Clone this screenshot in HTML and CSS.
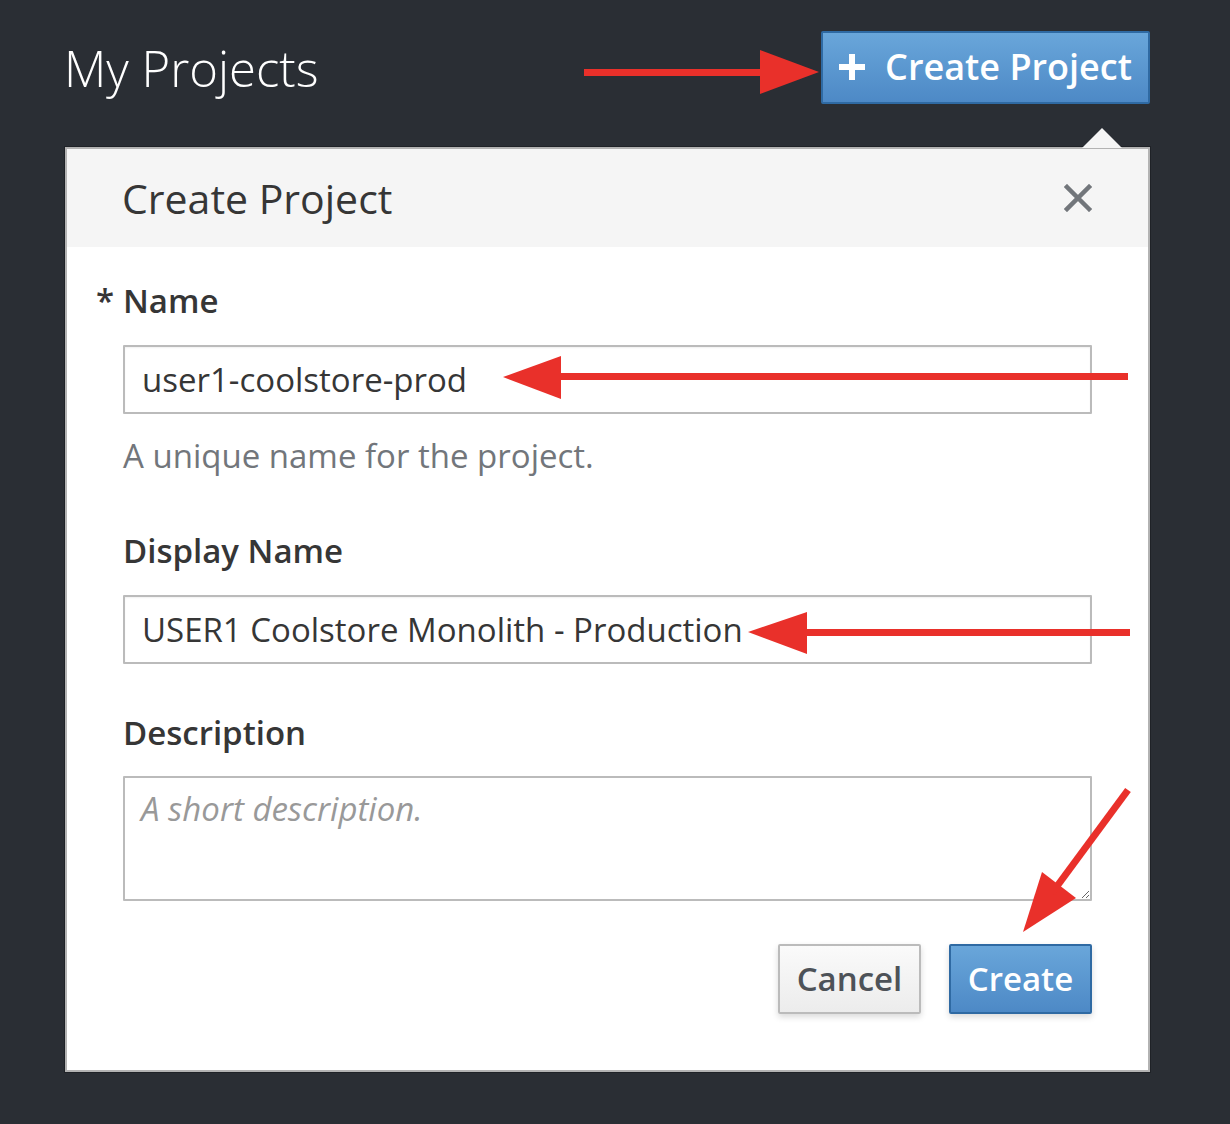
FILE: index.html
```html
<!DOCTYPE html>
<html lang="en">
<head>
<meta charset="utf-8">
<title>My Projects</title>
<link rel="stylesheet" href="styles.css">
</head>
<body>
<div class="page">
  <header class="top">
    <h1 class="page-title">My Projects</h1>
    <button class="btn-create-project" type="button">
      <svg class="plus" width="26" height="26" viewBox="0 0 26 26" aria-hidden="true"><rect x="10" y="0" width="6" height="26" fill="#fff"/><rect x="0" y="10" width="26" height="6" fill="#fff"/></svg>
      <span>Create Project</span>
    </button>
  </header>

  <section class="popover">
    <div class="caret"></div>
    <div class="pop-head">
      <h2 class="pop-title">Create Project</h2>
      <button class="close" type="button" aria-label="Close">
        <svg width="28" height="28" viewBox="0 0 28 28"><path d="M3 3 L25 25 M25 3 L3 25" stroke="#72767b" stroke-width="4.5" stroke-linecap="square"/></svg>
      </button>
    </div>
    <form class="pop-body">
      <label class="label"><span class="req">*</span>Name</label>
      <input class="input" type="text" value="user1-coolstore-prod">
      <p class="help">A unique name for the project.</p>

      <label class="label label-gap">Display Name</label>
      <input class="input" type="text" value="USER1 Coolstore Monolith - Production">

      <label class="label label-gap2">Description</label>
      <textarea class="textarea" placeholder="A short description."></textarea>

      <div class="actions">
        <button class="btn btn-default" type="button">Cancel</button>
        <button class="btn btn-primary" type="button">Create</button>
      </div>
    </form>
  </section>

  <svg class="marks" width="1230" height="1124" viewBox="0 0 1230 1124" aria-hidden="true">
    <g fill="#e9302a">
      <rect x="584" y="69" width="182" height="7"/>
      <polygon points="760,50 819,72 760,94"/>
      <rect x="555" y="373" width="573" height="7"/>
      <polygon points="503,377 561,356 561,399"/>
      <rect x="800" y="629" width="330" height="7"/>
      <polygon points="748,632 807,612 807,654"/>
      <polygon points="1023,932 1042,872 1076,898"/>
    </g>
    <line x1="1128" y1="790" x2="1052" y2="893" stroke="#e9302a" stroke-width="7"/>
  </svg>
</div>
</body>
</html>
```
FILE: styles.css
```css
* { box-sizing: border-box; }

html, body {
  margin: 0;
  padding: 0;
  background: #2a2e34;
}

body {
  font-family: "Open Sans", "Liberation Sans", sans-serif;
  color: #363636;
}

.page {
  position: relative;
  width: 1230px;
  height: 1124px;
  overflow: hidden;
}

.top {
  display: flex;
  justify-content: space-between;
  align-items: flex-start;
  padding: 31px 80px 0 64px;
}

.page-title {
  margin: 9px 0 0 0;
  font-size: 49px;
  line-height: 56px;
  font-weight: 300;
  color: #ffffff;
}

.btn-create-project {
  display: flex;
  align-items: center;
  justify-content: center;
  gap: 20px;
  width: 329px;
  height: 73px;
  padding: 0 0 2px 0;
  border: 2px solid #2f6aa3;
  border-radius: 2px;
  background: linear-gradient(#69a6da, #4d89c6);
  color: #ffffff;
  font-family: inherit;
  font-size: 36px;
  font-weight: 600;
}

.plus { flex: none; }

.popover {
  position: relative;
  margin: 43px 0 0 65px;
  width: 1085px;
  background: #ffffff;
  border: 2px solid #b3b3b3;
  box-shadow: 0 0 0 1px rgba(0,0,0,0.25);
}

.caret {
  position: absolute;
  top: -21px;
  left: 1015px;
  width: 0;
  height: 0;
  border-left: 20px solid transparent;
  border-right: 20px solid transparent;
  border-bottom: 20px solid #f5f5f5;
}

.pop-head {
  display: flex;
  align-items: center;
  justify-content: space-between;
  height: 98px;
  padding: 0 56px 0 55px;
  background: #f5f5f5;
}

.pop-title {
  margin: 0;
  font-size: 41px;
  line-height: 50px;
  font-weight: 400;
  color: #363636;
}

.close {
  display: flex;
  padding: 0;
  border: 0;
  background: none;
}

.pop-body {
  display: flex;
  flex-direction: column;
  padding: 34px 56px 56px 56px;
}

.label {
  display: block;
  font-size: 33px;
  line-height: 40px;
  font-weight: 600;
  color: #363636;
}

.req {
  display: inline-block;
  width: 27px;
  margin-left: -27px;
}

.label-gap { margin-top: 55px; }
.label-gap2 { margin-top: 49px; }

.input {
  display: block;
  width: 100%;
  height: 69px;
  margin-top: 24px;
  padding: 0 17px;
  border: 2px solid #bbbbbb;
  border-radius: 1px;
  box-shadow: inset 0 1px 2px rgba(0,0,0,0.06);
  font-family: inherit;
  font-size: 33px;
  color: #363636;
  background: #ffffff;
}

.help {
  margin: 22px 0 0 0;
  font-size: 33px;
  line-height: 40px;
  color: #72767b;
}

.textarea {
  display: block;
  width: 100%;
  height: 125px;
  margin-top: 23px;
  padding: 11px 16px 9px 16px;
  border: 2px solid #bbbbbb;
  border-radius: 1px;
  font-family: inherit;
  font-size: 33px;
  line-height: 40px;
  color: #363636;
  resize: vertical;
}

.textarea::placeholder {
  color: #999999;
  font-style: italic;
}

.actions {
  display: flex;
  justify-content: flex-end;
  gap: 28px;
  margin-top: 43px;
}

.btn {
  width: 143px;
  height: 70px;
  padding: 0 0 2px 0;
  border-radius: 2px;
  font-family: inherit;
  font-size: 33px;
  font-weight: 600;
  box-shadow: 0 3px 6px rgba(0,0,0,0.15);
}

.btn-default {
  border: 2px solid #bbbbbb;
  background: linear-gradient(#fafafa, #ececec);
  color: #4d5258;
}

.btn-primary {
  border: 2px solid #2f6aa3;
  background: linear-gradient(#69a6da, #4d89c6);
  color: #ffffff;
}

.marks {
  position: absolute;
  top: 0;
  left: 0;
  pointer-events: none;
}
```
